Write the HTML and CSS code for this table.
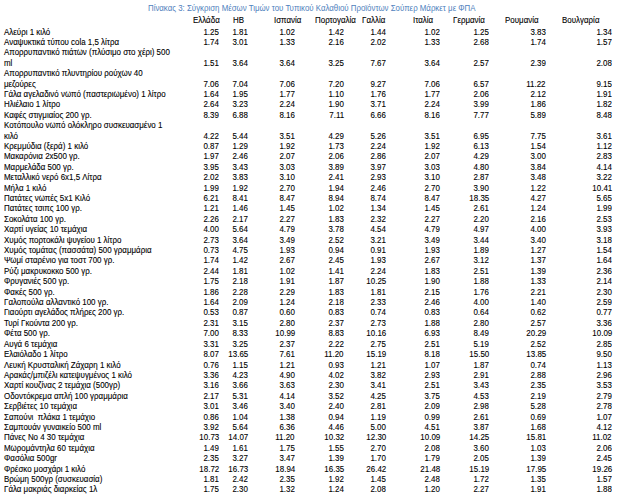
FILE: index.html
```html
<!DOCTYPE html>
<html lang="el">
<head>
<meta charset="utf-8">
<title>Πίνακας 3</title>
<link rel="stylesheet" href="styles.css">
</head>
<body>
<div class="page">
  <div class="title"><span class="t">Πίνακας 3: Σύγκριση Μέσων Τιμών του Τυπικού Καλαθιού Προϊόντων Σούπερ Μάρκετ με ΦΠΑ</span></div>
  <div class="row head">
    <span></span>
    <span><span class="t">Ελλάδα</span></span>
    <span><span class="t">HB</span></span>
    <span><span class="t">Ισπανία</span></span>
    <span><span class="t">Πορτογαλία</span></span>
    <span><span class="t">Γαλλία</span></span>
    <span><span class="t">Ιταλία</span></span>
    <span><span class="t">Γερμανία</span></span>
    <span><span class="t">Ρουμανία</span></span>
    <span><span class="t">Βουλγαρία</span></span>
  </div>
  <div class="body" id="body"></div>
</div>
<script src="app.js"></script>
</body>
</html>
```

FILE: app.js
```js
const rows = [
  ["Αλεύρι 1 κιλό", "1.25 1.81 1.02 1.42 1.44 1.02 1.25 3.83 1.34"],
  ["Αναψυκτικά τύπου cola 1,5 λίτρα", "1.74 3.01 1.33 2.16 2.02 1.33 2.68 1.74 1.57"],
  ["Απορρυπαντικό πιάτων (πλύσιμο στο χέρι) 500|ml", "1.51 3.64 3.64 3.25 7.67 3.64 2.57 2.39 2.08"],
  ["Απορρυπαντικό πλυντηρίου ρούχων 40|μεζούρες", "7.06 7.04 7.06 7.20 9.27 7.06 6.57 11.22 9.15"],
  ["Γάλα αγελαδινό νωπό (παστεριωμένο) 1 λίτρο", "1.64 1.95 1.77 1.10 1.76 1.77 2.06 2.12 1.91"],
  ["Ηλιέλαιο 1 λίτρο", "2.64 3.23 2.24 1.90 3.71 2.24 3.99 1.86 1.82"],
  ["Καφές στιγμιαίος 200 γρ.", "8.39 6.88 8.16 7.11 6.66 8.16 7.77 5.89 8.48"],
  ["Κοτόπουλο νωπό ολόκληρο συσκευασμένο 1|κιλό", "4.22 5.44 3.51 4.29 5.26 3.51 6.95 7.75 3.61"],
  ["Κρεμμύδια (ξερά) 1 κιλό", "0.87 1.29 1.92 1.73 2.24 1.92 6.13 1.54 1.12"],
  ["Μακαρόνια 2x500 γρ.", "1.97 2.46 2.07 2.06 2.86 2.07 4.29 3.00 2.83"],
  ["Μαρμελάδα 500 γρ.", "3.95 3.43 3.03 3.89 3.97 3.03 4.80 3.84 4.14"],
  ["Μεταλλικό νερό 6x1,5 Λίτρα", "2.02 3.83 3.10 2.41 2.93 3.10 2.87 3.48 3.22"],
  ["Μήλα 1 κιλό", "1.99 1.92 2.70 1.94 2.46 2.70 3.90 1.22 10.41"],
  ["Πατάτες νωπές 5x1 Κιλό", "6.21 8.41 8.47 8.94 8.74 8.47 18.35 4.27 5.65"],
  ["Πατάτες τσιπς 100 γρ.", "1.21 1.46 1.45 1.02 1.34 1.45 2.61 1.24 1.99"],
  ["Σοκολάτα 100 γρ.", "2.26 2.17 2.27 1.83 2.32 2.27 2.20 2.16 2.53"],
  ["Χαρτί υγείας 10 τεμάχια", "4.00 5.64 4.79 3.78 4.54 4.79 4.97 4.00 3.93"],
  ["Χυμός πορτοκάλι ψυγείου 1 λίτρο", "2.73 3.64 3.49 2.52 3.21 3.49 3.44 3.40 3.18"],
  ["Χυμός τομάτας (πασσάτα) 500 γραμμάρια", "0.73 4.75 1.93 0.94 0.91 1.93 1.89 1.27 1.54"],
  ["Ψωμί σταρένιο για τοστ 700 γρ.", "1.74 1.42 2.67 2.45 1.93 2.67 3.12 1.37 1.64"],
  ["Ρύζι μακρυκοκκο 500 γρ.", "2.44 1.81 1.02 1.41 2.24 1.83 2.51 1.39 2.36"],
  ["Φρυγανιές 500 γρ.", "1.75 2.18 1.91 1.87 10.25 1.90 1.88 1.33 2.14"],
  ["Φακές 500 γρ.", "1.86 2.28 2.29 1.83 1.81 2.15 1.76 2.21 2.30"],
  ["Γαλοπούλα αλλαντικό 100 γρ.", "1.64 2.09 1.24 2.18 2.33 2.46 4.00 1.40 2.59"],
  ["Γιαούρτι αγελάδος πλήρες 200 γρ.", "0.53 0.87 0.60 0.83 0.74 0.83 0.64 0.62 0.77"],
  ["Τυρί Γκούντα 200 γρ.", "2.31 3.15 2.80 2.37 2.73 1.88 2.80 2.57 3.36"],
  ["Φέτα 500 γρ.", "7.00 8.33 10.99 8.83 10.16 6.93 8.49 20.29 10.09"],
  ["Αυγά 6 τεμάχια", "3.31 3.25 2.37 2.22 2.75 2.51 5.19 2.52 2.85"],
  ["Ελαιόλαδο 1 λίτρο", "8.07 13.65 7.61 11.20 15.19 8.18 15.50 13.85 9.50"],
  ["Λευκή Κρυσταλική Ζάχαρη 1 κιλό", "0.76 1.15 1.21 0.93 1.21 1.07 1.87 0.74 1.13"],
  ["Αρακάς/μπιζέλι κατεψυγμένος 1 κιλό", "3.36 4.23 4.90 4.02 3.82 2.93 2.91 2.88 2.96"],
  ["Χαρτί κουζίνας 2 τεμάχια (500γρ)", "3.16 3.66 3.63 2.30 3.41 2.51 3.43 2.35 3.53"],
  ["Οδοντόκρεμα απλή 100 γραμμάρια", "2.17 5.31 4.14 3.52 4.25 3.75 4.53 2.19 2.79"],
  ["Σερβιέτες 10 τεμάχια", "3.01 3.46 3.40 2.40 2.81 2.09 2.98 5.28 2.78"],
  ["Σαπούνι\u00a0 πλάκα 1 τεμάχιο", "0.86 1.04 1.38 0.94 1.19 0.99 2.61 0.69 1.07"],
  ["Σαμπουάν γυναικείο 500 ml", "3.92 5.64 6.36 4.46 5.00 4.51 3.87 1.68 4.12"],
  ["Πάνες Νο 4 30 τεμάχια", "10.73 14.07 11.20 10.32 12.30 10.09 14.25 15.81 11.02"],
  ["Μωρομάντηλα 60 τεμάχια", "1.49 1.61 1.75 1.55 2.70 2.08 3.60 1.03 2.06"],
  ["Φασόλια 500gr", "2.35 3.27 3.47 1.39 1.70 1.79 2.05 1.39 2.45"],
  ["Φρέσκο μοσχάρι 1 κιλό", "18.72 16.73 18.94 16.35 26.42 21.48 15.19 17.95 19.26"],
  ["Βρώμη 500γρ (συσκευασία)", "1.81 2.42 2.35 1.92 1.45 2.48 1.72 1.35 1.57"],
  ["Γάλα μακριάς διαρκείας 1λ", "1.75 2.30 1.32 1.24 2.08 1.20 2.27 1.91 1.88"]
];
const body = document.getElementById("body");
function cell(cls) {
  const c = document.createElement("span");
  c.className = cls;
  const t = document.createElement("span");
  t.className = "t";
  c.appendChild(t);
  return [c, t];
}
for (const [label, vals] of rows) {
  const row = document.createElement("div");
  row.className = "row";
  const [l, lt] = cell("label");
  label.split("|").forEach((part, i) => {
    if (i) lt.appendChild(document.createElement("br"));
    lt.appendChild(document.createTextNode(part));
  });
  row.appendChild(l);
  for (const v of vals.split(" ")) {
    const [c, t] = cell("num");
    t.textContent = v;
    row.appendChild(c);
  }
  body.appendChild(row);
}
```

FILE: styles.css
```css
html, body {
  margin: 0;
  padding: 0;
  background: #ffffff;
}
.page {
  width: 624px;
  font-family: "Liberation Sans", Arial, sans-serif;
  font-size: 9.7px;
  color: #000000;
}
/* Arial Narrow look: Liberation Sans compressed horizontally */
.t {
  display: block;
  width: max-content;
  white-space: nowrap;
  transform: scaleX(0.82);
  transform-origin: 0 50%;
  -webkit-text-stroke: 0.12px currentColor;
}
.title {
  color: #4f81bd;
  font-size: 9.6px;
  line-height: 10px;
  padding-top: 3px;
}
.title .t {
  margin: 0 auto;
  transform-origin: 50% 50%;
  -webkit-text-stroke: 0;
}
.row {
  display: grid;
  grid-template-columns: 189px 26px 29px 47px 49px 42px 54px 49px 57px 66px;
  padding-left: 4px;
  line-height: 10.4px;
  align-items: end;
}
.head {
  margin-top: 2px;
  margin-bottom: 1.5px;
  line-height: 10px;
}
.head > span:nth-child(3) { padding-left: 14px; }
.head > span:nth-child(4) { padding-left: 26px; }
.head > span:nth-child(5) { padding-left: 20px; }
.head > span:nth-child(6) { padding-left: 18px; }
.head > span:nth-child(7) { padding-left: 27px; }
.head > span:nth-child(8) { padding-left: 13px; }
.head > span:nth-child(9) { padding-left: 16px; }
.head > span:nth-child(10) { padding-left: 16px; }
.num .t {
  margin-left: auto;
  transform-origin: 100% 50%;
}
```
